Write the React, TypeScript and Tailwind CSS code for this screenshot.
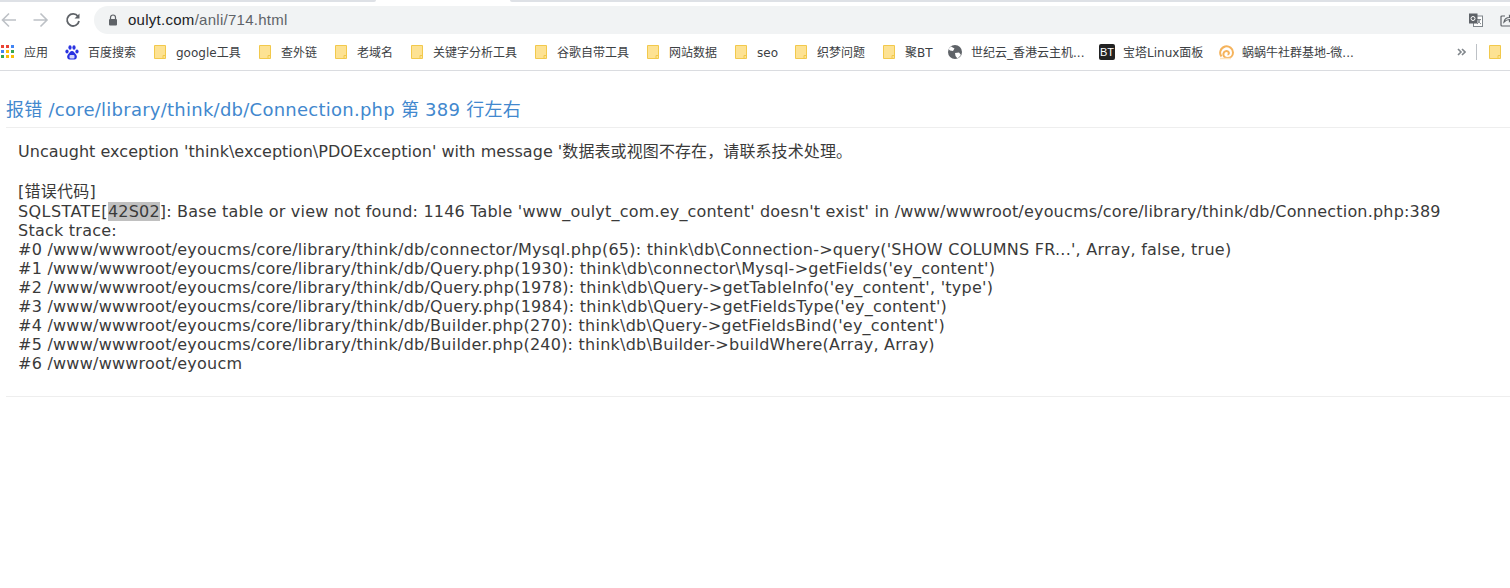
import React from 'react';

const Folder = () => (
  <svg width="12" height="14" viewBox="0 0 12 14" className="shrink-0">
    <path d="M0.5 0.5H11.5V13.5H0.5Z" fill="#fde293" stroke="#f2c94c" />
    <path d="M9 13.5V10.5H11.5" fill="none" stroke="#f2c94c" />
  </svg>
);

const Bookmark = ({ icon, label, w, iw = 22 }: { icon: React.ReactNode; label: string; w: number; iw?: number }) => (
  <div className="flex items-center shrink-0" style={{ width: w }}>
    <div className="flex items-center shrink-0" style={{ width: iw }}>{icon}</div>
    <span className="text-[12px] leading-[16px] pt-[1px] text-[#3c4043] whitespace-nowrap">{label}</span>
  </div>
);

const Apps = () => (
  <svg width="14" height="14" viewBox="0 0 14 14" className="shrink-0">
    <rect x="0" y="0" width="3" height="3" fill="#ea4335" />
    <rect x="5" y="0" width="3" height="3" fill="#ea4335" />
    <rect x="10" y="0" width="3" height="3" fill="#4285f4" />
    <rect x="0" y="5" width="3" height="3" fill="#4285f4" />
    <rect x="5" y="5" width="3" height="3" fill="#fbbc04" />
    <rect x="10" y="5" width="3" height="3" fill="#34a853" />
    <rect x="0" y="10" width="3" height="3" fill="#34a853" />
    <rect x="5" y="10" width="3" height="3" fill="#fbbc04" />
    <rect x="10" y="10" width="3" height="3" fill="#fbbc04" />
  </svg>
);

const Paw = () => (
  <svg width="14" height="15" viewBox="0 0 14 15" className="shrink-0">
    <g fill="#2932e1">
      <ellipse cx="2" cy="6.5" rx="1.6" ry="2" />
      <ellipse cx="5" cy="2.5" rx="1.6" ry="2.2" />
      <ellipse cx="9" cy="2.5" rx="1.6" ry="2.2" />
      <ellipse cx="12" cy="6.5" rx="1.6" ry="2" />
      <path d="M7 6C5 6 4.5 8 3 9.500C1.500 11 2 14.500 4.500 14.500H9.500C12 14.500 12.500 11 11 9.500C9.500 8 9 6 7 6Z" />
    </g>
    <rect x="4.500" y="10" width="5" height="3.500" rx="1" fill="#fff" opacity="0.8" />
  </svg>
);

const Globe = () => (
  <svg width="14" height="14" viewBox="0 0 14 14" className="shrink-0">
    <circle cx="7" cy="7" r="7" fill="#5f6368" />
    <path d="M3 1.500L6.500 3.500L5 6L2 5.500L0.500 4ZM7 8L11 7.500L13 10L9.500 13.500L7.500 11Z" fill="#fff" />
  </svg>
);

const Snail = () => (
  <svg width="15" height="15" viewBox="0 0 15 15" fill="none" className="shrink-0">
    <path d="M2.500 11.500C0 8.500 1 3 6 1.500C10 0.500 14 3.500 14 7.500C14 11 11.500 13 8.500 13C5.500 13 4 11 4.500 8.500C5 6.500 7 5.500 9 6.500C10.500 7.500 10 9.500 8.500 9.500" stroke="#f5b35c" strokeWidth="2" />
    <path d="M1 13.500H12" stroke="#fde3bd" strokeWidth="1.500" />
  </svg>
);

const Bt = () => (
  <div className="w-4 h-4 rounded-[2px] bg-[#222] text-white text-[11px] flex items-center justify-center leading-none shrink-0 font-['Liberation_Sans',sans-serif]">BT</div>
);

const Translate = () => (
  <svg width="14" height="14" viewBox="0 0 14 14" className="shrink-0">
    <rect x="4.500" y="3" width="9" height="10.500" fill="#fff" stroke="#80868b" />
    <path d="M8 6.500H12M9 6.500C9.500 8.500 10.500 10 12 11M11 6.500C10.500 8.500 9.500 10 8 11" stroke="#80868b" fill="none" />
    <rect x="0" y="0.500" width="8.500" height="10" fill="#5f6368" />
    <circle cx="4" cy="5.500" r="2" stroke="#fff" fill="none" />
  </svg>
);

const Share = () => (
  <svg width="14" height="14" viewBox="0 0 14 14" fill="none" stroke="#5f6368" strokeWidth="1.200" className="shrink-0">
    <path d="M5 3H2C1.300 3 1 3.300 1 4V12C1 12.700 1.300 13 2 13H12C12.700 13 13 12.700 13 12V8" />
    <path d="M4 9C4.500 6 7 4.500 9.500 4.500V2.500L13.500 5.500L9.500 8.500V6.500C7.500 6.500 5.500 7.500 4 9Z" />
  </svg>
);

const trace = [
  "#0 /www/wwwroot/eyoucms/core/library/think/db/connector/Mysql.php(65): think\\db\\Connection->query('SHOW COLUMNS FR...', Array, false, true)",
  "#1 /www/wwwroot/eyoucms/core/library/think/db/Query.php(1930): think\\db\\connector\\Mysql->getFields('ey_content')",
  "#2 /www/wwwroot/eyoucms/core/library/think/db/Query.php(1978): think\\db\\Query->getTableInfo('ey_content', 'type')",
  "#3 /www/wwwroot/eyoucms/core/library/think/db/Query.php(1984): think\\db\\Query->getFieldsType('ey_content')",
  "#4 /www/wwwroot/eyoucms/core/library/think/db/Builder.php(270): think\\db\\Query->getFieldsBind('ey_content')",
  "#5 /www/wwwroot/eyoucms/core/library/think/db/Builder.php(240): think\\db\\Builder->buildWhere(Array, Array)",
  '#6 /www/wwwroot/eyoucm',
];

export default function App() {
  return (
    <div className="w-[1510px] h-[588px] overflow-hidden bg-white font-['DejaVu_Sans','Noto_Sans_CJK_SC',sans-serif]">
      {/* Tab strip */}
      <div className="h-[2px] flex">
        <div className="w-[376px] bg-[#dee1e6] rounded-br-[3px]" />
        <div className="w-[134px] bg-white" />
        <div className="flex-1 bg-[#dee1e6] rounded-bl-[3px]" />
      </div>

      {/* Toolbar */}
      <div className="h-[32px] flex items-center pt-[4px]">
        <div className="w-[94px] pl-[1px] flex items-center gap-[16px] shrink-0">
          <svg width="16" height="16" viewBox="0 0 16 16" fill="none" stroke="#bdc1c6" strokeWidth="1.600"><path d="M15 8H1.500M8 1.500L1.500 8L8 14.500" /></svg>
          <svg width="16" height="16" viewBox="0 0 16 16" fill="none" stroke="#bdc1c6" strokeWidth="1.600"><path d="M0.500 8H14M7.500 1.500L14 8L7.500 14.500" /></svg>
          <svg width="16" height="16" viewBox="0 0 16 16" fill="none" stroke="#5f6368" strokeWidth="1.800"><path d="M13 4.500A6 6 0 1 0 14 9" /><path d="M14.500 1.500V6.500H9.500Z" fill="#5f6368" stroke="none" /></svg>
        </div>
        <div className="flex-1 h-[28px] bg-[#f1f3f4] rounded-l-[14px] flex items-center pl-[14px]">
          <svg width="10" height="12" viewBox="0 0 10 12" className="shrink-0"><path d="M2.500 5V3.500a2.500 2.500 0 0 1 5 0V5" fill="none" stroke="#5f6368" strokeWidth="1.200" /><rect x="1" y="5" width="8" height="6.500" rx="1" fill="#5f6368" /></svg>
          <span className="ml-[10px] text-[15px] tracking-[0.27px] text-[#202124] font-['Liberation_Sans',sans-serif]">oulyt.com<span className="text-[#5f6368]">/anli/714.html</span></span>
          <div className="ml-auto flex items-center gap-[17px] mr-[-4px]">
            <Translate />
            <Share />
          </div>
        </div>
      </div>

      {/* Bookmarks */}
      <div className="h-[37px] flex items-center border-b border-[#dadce0] pl-[1px]">
        <Bookmark icon={<Apps />} label="应用" w={64} iw={23} />
        <Bookmark icon={<Paw />} label="百度搜索" w={89} iw={23} />
        <Bookmark icon={<Folder />} label="google工具" w={105} />
        <Bookmark icon={<Folder />} label="查外链" w={76} />
        <Bookmark icon={<Folder />} label="老域名" w={76} />
        <Bookmark icon={<Folder />} label="关键字分析工具" w={124} />
        <Bookmark icon={<Folder />} label="谷歌自带工具" w={112} />
        <Bookmark icon={<Folder />} label="网站数据" w={88} />
        <Bookmark icon={<Folder />} label="seo" w={60} />
        <Bookmark icon={<Folder />} label="织梦问题" w={88} />
        <Bookmark icon={<Folder />} label="聚BT" w={65} />
        <Bookmark icon={<Globe />} label="世纪云_香港云主机..." w={151} iw={23} />
        <Bookmark icon={<Bt />} label="宝塔Linux面板" w={120} iw={24} />
        <Bookmark icon={<Snail />} label="蜗蜗牛社群基地-微..." w={238} iw={23} />
        <svg width="9" height="8" viewBox="0 0 9 8" fill="none" stroke="#80868b" strokeWidth="1.600" className="shrink-0"><path d="M1 1L4 4L1 7M5 1L8 4L5 7" /></svg>
        <div className="w-px h-[16px] bg-[#bdc1c6] ml-[10px] mr-[12px] shrink-0" />
        <Folder />
      </div>

      {/* Page */}
      <div className="pl-[6px]">
        <h1 className="mt-[26px] h-[31px] leading-[26px] text-[18px] tracking-[0.25px] font-normal text-[#4288ce] border-b border-[#eeeeee] whitespace-nowrap">
          报错 /core/library/think/db/Connection.php 第 389 行左右
        </h1>
        <div className="pl-[12px] pt-[14px] border-b border-[#eeeeee] text-[16px] leading-[19px] tracking-[0.24px] text-[#3a3a3a] whitespace-nowrap h-[269px]">
          <div className="tracking-[0.03px]">Uncaught exception 'think\exception\PDOException' with message '<span className="tracking-[0.1px]">数据表或视图不存在，请联系技术处理。</span></div>
          <div className="h-[21px]" />
          <div className="h-[20px]">[错误代码]</div>
          <div className="tracking-[0.19px]"><span className="tracking-[0.42px]">SQLSTATE[</span><span className="bg-[#c0c0c0]">42S02</span>]: Base table or view not found: 1146 Table 'www_oulyt_com.ey_content' doesn't exist' in /www/wwwroot/eyoucms/core/library/think/db/Connection.php:389</div>
          <div>Stack trace:</div>
          {trace.map((t) => (
            <div key={t}>{t}</div>
          ))}
        </div>
      </div>
    </div>
  );
}
